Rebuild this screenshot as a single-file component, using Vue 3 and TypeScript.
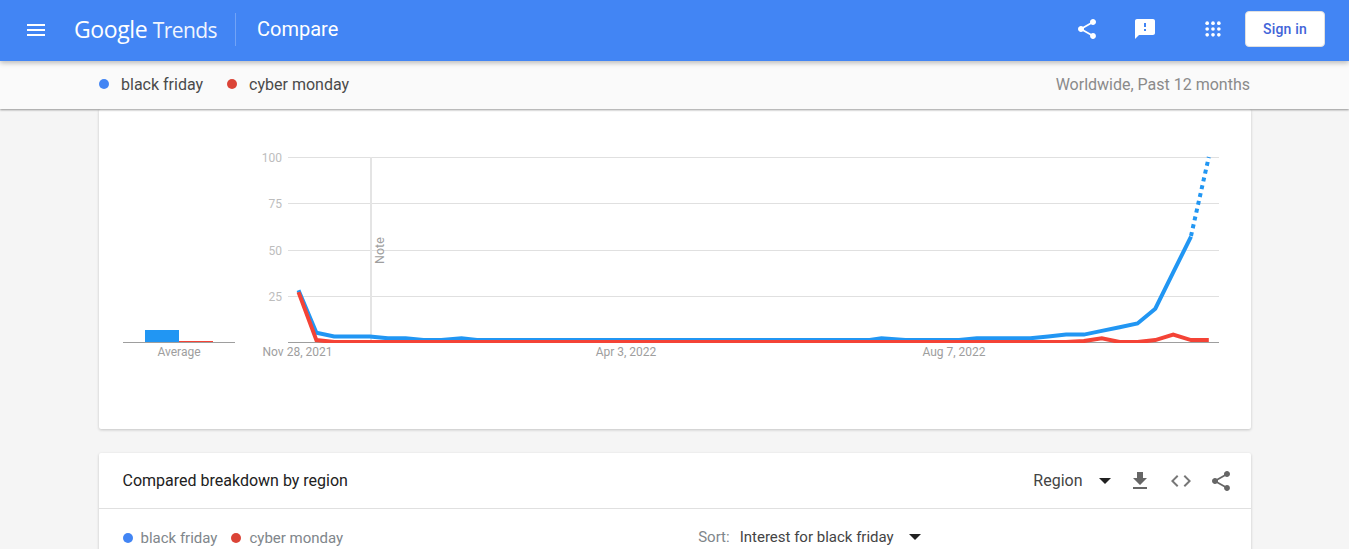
<script setup lang="ts">
const X0 = 298.5
const STEP = 17.85
const Y0 = 342
const UNIT = 1.85

const blue = [
  28, 5, 3, 3, 3, 2, 2, 1, 1, 2, 1, 1, 1, 1, 1, 1, 1, 1, 1, 1, 1, 1, 1, 1, 1, 1, 1, 1, 1, 1, 1, 1, 1,
  2, 1, 1, 1, 1, 2, 2, 2, 2, 3, 4, 4, 6, 8, 10, 18, 37.6, 57,
]
const red = [
  27, 1, 0, 0, 0, 0, 0, 0, 0, 0, 0, 0, 0, 0, 0, 0, 0, 0, 0, 0, 0, 0, 0, 0, 0, 0, 0, 0, 0, 0, 0, 0, 0,
  0, 0, 0, 0, 0, 0, 0, 0, 0, 0, 0, 0.5, 2, 0, 0, 1, 4, 1, 1,
]

const nudged: Record<number, number> = { 9: 461.5, 33: 881.5 }

function toPoints(values: number[]): string {
  return values
    .map((v, i) => `${(nudged[i] ?? X0 + i * STEP).toFixed(1)},${(Y0 - v * UNIT).toFixed(1)}`)
    .join(' ')
}

const bluePoints = toPoints(blue)
const redPoints = toPoints(red)
const dottedPoints = `${(X0 + 50 * STEP).toFixed(1)},236 ${(X0 + 51 * STEP).toFixed(1)},157`

const grid = [
  { y: 157.5, label: '100' },
  { y: 203.5, label: '75' },
  { y: 250.5, label: '50' },
  { y: 296.5, label: '25' },
]
const dates = [
  { x: 297.5, label: 'Nov 28, 2021' },
  { x: 626, label: 'Apr 3, 2022' },
  { x: 954, label: 'Aug 7, 2022' },
]
</script>

<template>
  <div class="page">
    <header class="topbar">
      <button class="icon-btn menu" aria-label="Menu">
        <svg viewBox="0 0 24 24" width="24" height="24"><path d="M3 18h18v-2H3v2zm0-5h18v-2H3v2zm0-7v2h18V6H3z" /></svg>
      </button>
      <div class="logo"><span class="logo-g">Google</span> <span class="logo-t">Trends</span></div>
      <div class="divider"></div>
      <div class="page-name">Compare</div>
      <div class="top-actions">
        <svg class="act share" viewBox="0 0 24 24" width="24" height="24"><path d="M18 16.08c-.76 0-1.44.3-1.96.77L8.91 12.7c.05-.23.09-.46.09-.7s-.04-.47-.09-.7l7.05-4.11c.54.5 1.25.81 2.04.81 1.66 0 3-1.34 3-3s-1.34-3-3-3-3 1.34-3 3c0 .24.04.47.09.7L8.04 9.81C7.5 9.31 6.79 9 6 9c-1.66 0-3 1.34-3 3s1.34 3 3 3c.79 0 1.5-.31 2.04-.81l7.12 4.16c-.05.21-.08.43-.08.65 0 1.61 1.31 2.92 2.92 2.92s2.92-1.31 2.92-2.92-1.31-2.92-2.92-2.92z" /></svg>
        <svg class="act feedback" viewBox="0 0 24 24" width="24" height="24"><path d="M20 2H4c-1.1 0-2 .9-2 2v18l4-4h14c1.1 0 2-.9 2-2V4c0-1.1-.9-2-2-2zm-7 12h-2v-2h2v2zm0-4h-2V6h2v4z" /></svg>
        <svg class="act apps" viewBox="0 0 24 24" width="24" height="24"><circle v-for="c in 9" :key="c" :cx="5 + ((c - 1) % 3) * 7" :cy="5 + Math.floor((c - 1) / 3) * 7" r="2.2" /></svg>
        <button class="sign-in">Sign in</button>
      </div>
    </header>

    <div class="subbar">
      <div class="terms">
        <span class="dot dot-blue"></span><span class="term">black friday</span>
        <span class="dot dot-red"></span><span class="term">cyber monday</span>
      </div>
      <div class="scope">Worldwide, Past 12 months</div>
    </div>

    <main class="content">
      <section class="card chart-card">
        <svg class="chart" width="1152" height="320" viewBox="99 109 1152 320">
          <defs>
            <clipPath id="plot"><rect x="280" y="140" width="950" height="203" /></clipPath>
          </defs>
          <line x1="123" x2="235" y1="342.5" y2="342.5" stroke="#9e9e9e" />
          <rect x="145" y="330" width="34" height="12" fill="#2196f3" />
          <rect x="179" y="341" width="34" height="1" fill="#f44336" />
          <text x="179" y="356" class="axis date" text-anchor="middle">Average</text>

          <g v-for="g in grid" :key="g.label">
            <line x1="288" x2="1219" :y1="g.y" :y2="g.y" stroke="#e0e0e0" />
            <text x="282" :y="g.y + 4" class="axis value" text-anchor="end">{{ g.label }}</text>
          </g>
          <line x1="288" x2="1219" y1="342.5" y2="342.5" stroke="#9e9e9e" />
          <line x1="371" x2="371" y1="157" y2="342" stroke="#e4e4e4" stroke-width="2" />
          <text class="axis note" transform="translate(384 264) rotate(-90)">Note</text>

          <text v-for="d in dates" :key="d.label" :x="d.x" y="356" class="axis date" text-anchor="middle">{{ d.label }}</text>

          <g clip-path="url(#plot)">
            <polyline :points="bluePoints" class="line" stroke="#2196f3" />
            <polyline :points="dottedPoints" class="line" stroke="#2196f3" stroke-dasharray="4 4" />
            <polyline :points="redPoints" class="line" stroke="#f44336" />
          </g>
        </svg>
      </section>

      <section class="card breakdown">
        <div class="breakdown-head">
          <h2 class="breakdown-title">Compared breakdown by region</h2>
          <div class="breakdown-tools">
            <span class="region">Region</span>
            <span class="caret region-caret"></span>
            <svg class="tool dl" viewBox="0 0 24 24" width="24" height="24"><path d="M19 9h-4V3H9v6H5l7 7 7-7zM5 18v2h14v-2H5z" /></svg>
            <svg class="tool code" viewBox="0 0 24 24" width="24" height="24"><path d="M9.4 16.6 4.8 12l4.6-4.6L8 6l-6 6 6 6 1.4-1.4zm5.2 0 4.6-4.6-4.6-4.6L16 6l6 6-6 6-1.4-1.4z" /></svg>
            <svg class="tool" viewBox="0 0 24 24" width="24" height="24"><path d="M18 16.08c-.76 0-1.44.3-1.96.77L8.91 12.7c.05-.23.09-.46.09-.7s-.04-.47-.09-.7l7.05-4.11c.54.5 1.25.81 2.04.81 1.66 0 3-1.34 3-3s-1.34-3-3-3-3 1.34-3 3c0 .24.04.47.09.7L8.04 9.81C7.5 9.31 6.79 9 6 9c-1.66 0-3 1.34-3 3s1.34 3 3 3c.79 0 1.5-.31 2.04-.81l7.12 4.16c-.05.21-.08.43-.08.65 0 1.61 1.31 2.92 2.92 2.92s2.92-1.31 2.92-2.92-1.31-2.92-2.92-2.92z" /></svg>
          </div>
        </div>
        <div class="breakdown-filters">
          <div class="legend">
            <span class="dot dot-blue"></span><span class="legend-term">black friday</span>
            <span class="dot dot-red"></span><span class="legend-term">cyber monday</span>
          </div>
          <div class="sort">
            <span class="sort-label">Sort:</span>
            <span class="sort-value">Interest for black friday</span>
            <span class="caret sort-caret"></span>
          </div>
        </div>
      </section>
    </main>
  </div>
</template>

<style>
html,
body {
  margin: 0;
  height: 100%;
  overflow: hidden;
  background: #f5f5f5;
}
</style>

<style scoped>
.page {
  font-family: Roboto, "Liberation Sans", sans-serif;
  height: 549px;
  overflow: hidden;
  background: #f5f5f5;
}

.topbar {
  position: relative;
  z-index: 3;
  height: 61px;
  box-sizing: border-box;
  padding-bottom: 2px;
  display: flex;
  align-items: center;
  background: #4285f4;
  color: #fff;
  box-shadow: 0 2px 5px rgba(0, 0, 0, 0.26);
}

.icon-btn {
  border: 0;
  padding: 0;
  background: none;
  display: flex;
}

.menu {
  margin-left: 24px;
  fill: #fff;
}

.logo {
  margin-left: 26px;
  margin-top: -2px;
  width: 143px;
  font-family: "Open Sans", sans-serif;
  font-size: 23px;
  white-space: nowrap;
  letter-spacing: -0.4px;
}

.logo-t {
  font-size: 21px;
  letter-spacing: -0.6px;
  opacity: 0.92;
}

.divider {
  margin-left: 18px;
  width: 1px;
  height: 33px;
  background: rgba(255, 255, 255, 0.25);
}

.page-name {
  margin-left: 21px;
  margin-top: -2px;
  font-size: 20px;
}

.top-actions {
  margin-left: auto;
  margin-top: -1px;
  display: flex;
  align-items: center;
  padding-right: 24px;
  fill: #fff;
}

.act.share {
  margin-right: 34px;
}

.act.feedback {
  margin-right: 46px;
}

.act.apps {
  width: 20px;
  height: 20px;
  margin-right: 22px;
}

.sign-in {
  width: 80px;
  height: 36px;
  border: 1px solid #e0e0e0;
  border-radius: 4px;
  background: #fff;
  color: #4164d8;
  font: 500 14px Roboto, sans-serif;
  letter-spacing: 0.2px;
}

.subbar {
  position: relative;
  z-index: 2;
  height: 48px;
  box-sizing: border-box;
  padding: 0 99px 2px;
  display: flex;
  align-items: center;
  justify-content: space-between;
  background: #fafafa;
  box-shadow: 0 1px 2px rgba(0, 0, 0, 0.4);
  font-size: 16px;
}

.terms {
  display: flex;
  align-items: center;
  color: #4a4a4a;
}

.dot {
  width: 10px;
  height: 10px;
  border-radius: 50%;
  flex: none;
}

.dot-blue {
  background: #4285f4;
}

.dot-red {
  background: #db4437;
}

.term {
  margin-left: 12px;
  margin-right: 24px;
}

.scope {
  color: #8a8a8a;
}

.content {
  width: 1152px;
  margin: 0 auto;
}

.card {
  background: #fff;
  box-shadow: 0 1px 3px rgba(0, 0, 0, 0.2);
  border-radius: 2px;
}

.chart-card {
  height: 320px;
}

.chart {
  display: block;
}

.axis {
  font-family: Roboto, sans-serif;
  font-size: 12px;
}

.value {
  fill: #bdbdbd;
}

.date {
  fill: #9e9e9e;
}

.note {
  font-size: 12.5px;
  fill: #9e9e9e;
}

.line {
  fill: none;
  stroke-width: 4;
  stroke-linejoin: miter;
}

.breakdown {
  margin-top: 24px;
}

.breakdown-head {
  height: 55px;
  padding: 0 18px 0 24px;
  display: flex;
  align-items: center;
  justify-content: space-between;
  border-bottom: 1px solid #e0e0e0;
}

.breakdown-title {
  margin: 0;
  font-size: 16px;
  font-weight: 400;
  color: #212121;
}

.breakdown-tools {
  display: flex;
  align-items: center;
  color: #444;
  font-size: 16px;
  fill: #666;
}

.caret {
  width: 0;
  height: 0;
  border-left: 6px solid transparent;
  border-right: 6px solid transparent;
  border-top: 6px solid #212121;
}

.region-caret {
  margin-left: 16px;
  margin-right: 17px;
}

.tool {
  margin-right: 16px;
}

.dl {
  margin-right: 17px;
}

.tool:last-child {
  margin-right: 0;
}

.code {
  fill: #777;
}

.breakdown-filters {
  position: relative;
  padding: 0 24px 1px;
  height: 58px;
  display: flex;
  align-items: center;
  box-sizing: border-box;
}

.legend {
  display: flex;
  align-items: center;
  font-size: 15px;
  color: #80868b;
}

.legend-term {
  margin-left: 8px;
  margin-right: 14px;
}

.sort {
  margin-left: 341px;
  margin-top: -1px;
  display: flex;
  align-items: center;
  font-size: 15px;
  color: #444;
}

.sort-label {
  color: #80868b;
  margin-right: 10px;
}

.sort-caret {
  margin-left: 15px;
}
</style>
